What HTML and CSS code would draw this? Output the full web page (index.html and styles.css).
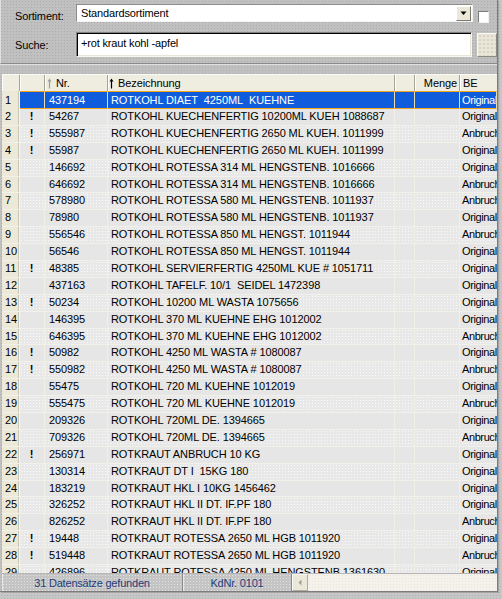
FILE: index.html
```html
<!DOCTYPE html>
<html lang="de">
<head>
<meta charset="utf-8">
<title>Artikelsuche</title>
<link rel="stylesheet" href="styles.css">
</head>
<body>
<div class="window">
  <div class="filter">
    <div class="frow frow-1">
      <label class="flabel">Sortiment:</label>
      <div class="combo">
        <span class="combo-text">Standardsortiment</span>
        <span class="combo-btn"><svg width="7" height="5" viewBox="0 0 7 5"><path d="M0.5 0.5h6l-3 3.5z" fill="#000"/></svg></span>
      </div>
      <span class="check"></span>
    </div>
    <div class="frow frow-2">
      <label class="flabel">Suche:</label>
      <div class="search">+rot kraut kohl -apfel</div>
      <span class="sbtn"></span>
    </div>
  </div>
  <div class="strip"></div>
  <div class="grid">
    <div class="hdr">
      <span class="h h-no"></span>
      <span class="h h-ic"></span>
      <span class="h h-nr"><svg class="arr" width="5" height="11" viewBox="0 0 5 11"><path d="M2.5 0.5L4.5 3.5H3.1V10.5H1.9V3.5H0.5z" fill="#9a9a9a"/></svg>Nr.</span>
      <span class="h h-bez"><svg class="arr" width="5" height="11" viewBox="0 0 5 11"><path d="M2.5 0.5L4.5 3.5H3.1V10.5H1.9V3.5H0.5z" fill="#000"/></svg>Bezeichnung</span>
      <span class="h h-x"></span>
      <span class="h h-menge">Menge</span>
      <span class="h h-be">BE</span>
    </div>
    <div class="body">
      <div class="row sel"><span class="c-no">1</span><span class="c-ic"></span><span class="c-nr">437194</span><span class="c-bez">ROTKOHL DIAET&nbsp; 4250ML&nbsp; KUEHNE</span><span class="c-x"></span><span class="c-menge"></span><span class="c-be">Original</span></div>
      <div class="row"><span class="c-no">2</span><span class="c-ic">!</span><span class="c-nr">54267</span><span class="c-bez">ROTKOHL KUECHENFERTIG 10200ML KUEH 1088687</span><span class="c-x"></span><span class="c-menge"></span><span class="c-be">Original</span></div>
      <div class="row odd"><span class="c-no">3</span><span class="c-ic">!</span><span class="c-nr">555987</span><span class="c-bez">ROTKOHL KUECHENFERTIG 2650 ML KUEH. 1011999</span><span class="c-x"></span><span class="c-menge"></span><span class="c-be">Anbruch</span></div>
      <div class="row"><span class="c-no">4</span><span class="c-ic">!</span><span class="c-nr">55987</span><span class="c-bez">ROTKOHL KUECHENFERTIG 2650 ML KUEH. 1011999</span><span class="c-x"></span><span class="c-menge"></span><span class="c-be">Original</span></div>
      <div class="row odd"><span class="c-no">5</span><span class="c-ic"></span><span class="c-nr">146692</span><span class="c-bez">ROTKOHL ROTESSA 314 ML HENGSTENB. 1016666</span><span class="c-x"></span><span class="c-menge"></span><span class="c-be">Original</span></div>
      <div class="row"><span class="c-no">6</span><span class="c-ic"></span><span class="c-nr">646692</span><span class="c-bez">ROTKOHL ROTESSA 314 ML HENGSTENB. 1016666</span><span class="c-x"></span><span class="c-menge"></span><span class="c-be">Anbruch</span></div>
      <div class="row odd"><span class="c-no">7</span><span class="c-ic"></span><span class="c-nr">578980</span><span class="c-bez">ROTKOHL ROTESSA 580 ML HENGSTENB. 1011937</span><span class="c-x"></span><span class="c-menge"></span><span class="c-be">Anbruch</span></div>
      <div class="row"><span class="c-no">8</span><span class="c-ic"></span><span class="c-nr">78980</span><span class="c-bez">ROTKOHL ROTESSA 580 ML HENGSTENB. 1011937</span><span class="c-x"></span><span class="c-menge"></span><span class="c-be">Original</span></div>
      <div class="row odd"><span class="c-no">9</span><span class="c-ic"></span><span class="c-nr">556546</span><span class="c-bez">ROTKOHL ROTESSA 850 ML HENGST. 1011944</span><span class="c-x"></span><span class="c-menge"></span><span class="c-be">Anbruch</span></div>
      <div class="row"><span class="c-no">10</span><span class="c-ic"></span><span class="c-nr">56546</span><span class="c-bez">ROTKOHL ROTESSA 850 ML HENGST. 1011944</span><span class="c-x"></span><span class="c-menge"></span><span class="c-be">Original</span></div>
      <div class="row odd"><span class="c-no">11</span><span class="c-ic">!</span><span class="c-nr">48385</span><span class="c-bez">ROTKOHL SERVIERFERTIG 4250ML KUE # 1051711</span><span class="c-x"></span><span class="c-menge"></span><span class="c-be">Original</span></div>
      <div class="row"><span class="c-no">12</span><span class="c-ic"></span><span class="c-nr">437163</span><span class="c-bez">ROTKOHL TAFELF. 10/1&nbsp; SEIDEL 1472398</span><span class="c-x"></span><span class="c-menge"></span><span class="c-be">Original</span></div>
      <div class="row odd"><span class="c-no">13</span><span class="c-ic">!</span><span class="c-nr">50234</span><span class="c-bez">ROTKOHL 10200 ML WASTA 1075656</span><span class="c-x"></span><span class="c-menge"></span><span class="c-be">Original</span></div>
      <div class="row"><span class="c-no">14</span><span class="c-ic"></span><span class="c-nr">146395</span><span class="c-bez">ROTKOHL 370 ML KUEHNE EHG 1012002</span><span class="c-x"></span><span class="c-menge"></span><span class="c-be">Original</span></div>
      <div class="row odd"><span class="c-no">15</span><span class="c-ic"></span><span class="c-nr">646395</span><span class="c-bez">ROTKOHL 370 ML KUEHNE EHG 1012002</span><span class="c-x"></span><span class="c-menge"></span><span class="c-be">Anbruch</span></div>
      <div class="row"><span class="c-no">16</span><span class="c-ic">!</span><span class="c-nr">50982</span><span class="c-bez">ROTKOHL 4250 ML WASTA # 1080087</span><span class="c-x"></span><span class="c-menge"></span><span class="c-be">Original</span></div>
      <div class="row odd"><span class="c-no">17</span><span class="c-ic">!</span><span class="c-nr">550982</span><span class="c-bez">ROTKOHL 4250 ML WASTA # 1080087</span><span class="c-x"></span><span class="c-menge"></span><span class="c-be">Anbruch</span></div>
      <div class="row"><span class="c-no">18</span><span class="c-ic"></span><span class="c-nr">55475</span><span class="c-bez">ROTKOHL 720 ML KUEHNE 1012019</span><span class="c-x"></span><span class="c-menge"></span><span class="c-be">Original</span></div>
      <div class="row odd"><span class="c-no">19</span><span class="c-ic"></span><span class="c-nr">555475</span><span class="c-bez">ROTKOHL 720 ML KUEHNE 1012019</span><span class="c-x"></span><span class="c-menge"></span><span class="c-be">Anbruch</span></div>
      <div class="row"><span class="c-no">20</span><span class="c-ic"></span><span class="c-nr">209326</span><span class="c-bez">ROTKOHL 720ML DE. 1394665</span><span class="c-x"></span><span class="c-menge"></span><span class="c-be">Original</span></div>
      <div class="row odd"><span class="c-no">21</span><span class="c-ic"></span><span class="c-nr">709326</span><span class="c-bez">ROTKOHL 720ML DE. 1394665</span><span class="c-x"></span><span class="c-menge"></span><span class="c-be">Anbruch</span></div>
      <div class="row"><span class="c-no">22</span><span class="c-ic">!</span><span class="c-nr">256971</span><span class="c-bez">ROTKRAUT ANBRUCH 10 KG</span><span class="c-x"></span><span class="c-menge"></span><span class="c-be">Original</span></div>
      <div class="row odd"><span class="c-no">23</span><span class="c-ic"></span><span class="c-nr">130314</span><span class="c-bez">ROTKRAUT DT I&nbsp; 15KG 180</span><span class="c-x"></span><span class="c-menge"></span><span class="c-be">Original</span></div>
      <div class="row"><span class="c-no">24</span><span class="c-ic"></span><span class="c-nr">183219</span><span class="c-bez">ROTKRAUT HKL I 10KG 1456462</span><span class="c-x"></span><span class="c-menge"></span><span class="c-be">Original</span></div>
      <div class="row odd"><span class="c-no">25</span><span class="c-ic"></span><span class="c-nr">326252</span><span class="c-bez">ROTKRAUT HKL II DT. IF.PF 180</span><span class="c-x"></span><span class="c-menge"></span><span class="c-be">Original</span></div>
      <div class="row"><span class="c-no">26</span><span class="c-ic"></span><span class="c-nr">826252</span><span class="c-bez">ROTKRAUT HKL II DT. IF.PF 180</span><span class="c-x"></span><span class="c-menge"></span><span class="c-be">Anbruch</span></div>
      <div class="row odd"><span class="c-no">27</span><span class="c-ic">!</span><span class="c-nr">19448</span><span class="c-bez">ROTKRAUT ROTESSA 2650 ML HGB 1011920</span><span class="c-x"></span><span class="c-menge"></span><span class="c-be">Original</span></div>
      <div class="row"><span class="c-no">28</span><span class="c-ic">!</span><span class="c-nr">519448</span><span class="c-bez">ROTKRAUT ROTESSA 2650 ML HGB 1011920</span><span class="c-x"></span><span class="c-menge"></span><span class="c-be">Anbruch</span></div>
      <div class="row odd"><span class="c-no">29</span><span class="c-ic"></span><span class="c-nr">426896</span><span class="c-bez">ROTKRAUT ROTESSA 4250 ML HENGSTENB 1361630</span><span class="c-x"></span><span class="c-menge"></span><span class="c-be">Original</span></div>
    </div>
  </div>
  <div class="status">
    <span class="panel p-count">31 Datensätze gefunden</span>
    <span class="panel p-kd">KdNr. 0101</span>
    <span class="hscroll">
      <span class="sb-arrow"><svg width="4" height="7" viewBox="0 0 4 7"><path d="M3.5 0.5v6L0.5 3.5z" fill="#a0a0a0"/></svg></span>
      <span class="sb-track"></span>
    </span>
  </div>
</div>
</body>
</html>
```

FILE: styles.css
```css
html, body {
  margin: 0;
  padding: 0;
}
body {
  width: 502px;
  height: 599px;
  overflow: hidden;
  background-color: #c6c6c6;
  background-image: radial-gradient(rgba(0,0,0,0.10) 0.6px, transparent 0.9px);
  background-size: 3px 3px;
  font-family: "Liberation Sans", Arial, sans-serif;
  font-size: 11px;
  color: #000;
}
.window {
  width: 497px;
  height: 591px;
  display: flex;
  flex-direction: column;
  background-color: #c0c0c0;
  background-image: radial-gradient(rgba(0,0,0,0.10) 0.6px, transparent 0.9px);
  background-size: 3px 3px;
  border-right: 1px solid #7c7c7c;
  border-bottom: 1px solid #7c7c7c;
  box-shadow: 1px 1px 0 #a4a4a4;
  overflow: hidden;
}

/* filter panel */
.filter {
  height: 64px;
  flex: none;
  box-sizing: border-box;
  border-left: 1px solid #e2e2e2;
  border-bottom: 1px solid #8a8a8a;
  box-shadow: 0 1px 0 #e0e0e0;
  padding-top: 4px;
  display: flex;
  flex-direction: column;
  gap: 9px;
}
.frow {
  display: flex;
  align-items: flex-start;
}
.flabel {
  width: 61px;
  padding-left: 14px;
  letter-spacing: -0.15px;
  line-height: 13px;
}
.frow-1 .flabel { margin-top: 6px; }
.frow-2 .flabel { margin-top: 7px; }
.combo {
  width: 397px;
  height: 18px;
  box-sizing: border-box;
  background: #fff;
  border: 1px solid;
  border-color: #8c8c8c #f4f4f4 #f4f4f4 #8c8c8c;
  display: flex;
  align-items: center;
  justify-content: space-between;
}
.combo-text {
  padding-left: 4px;
  letter-spacing: -0.15px;
  line-height: 14px;
}
.combo-btn {
  width: 15px;
  height: 15px;
  box-sizing: border-box;
  background: #ebe8d8;
  border: 1px solid;
  border-color: #ffffff #7a7a70 #7a7a70 #ffffff;
  display: flex;
  align-items: center;
  justify-content: center;
  margin-right: 1px;
}
.check {
  width: 11px;
  height: 12px;
  box-sizing: border-box;
  margin-left: 5px;
  margin-top: 7px;
  background: #fff;
  border: 1px solid;
  border-color: #7c7c7c #f0f0f0 #f0f0f0 #7c7c7c;
}
.search {
  width: 397px;
  height: 25px;
  box-sizing: border-box;
  background: #fff;
  border: 1px solid;
  border-color: #808080 #f6f6ee #f6f6ee #808080;
  box-shadow: inset 1px 1px 0 #000, inset -1px -1px 0 #e8e5d6;
  padding: 4px 0 0 4px;
  line-height: 13px;
  letter-spacing: -0.15px;
}
.sbtn {
  width: 20px;
  height: 24px;
  margin-left: 5px;
  margin-top: 1px;
  box-sizing: border-box;
  background-color: #e9e6d8;
  background-image: radial-gradient(rgba(0,0,0,0.12) 0.6px, transparent 0.9px);
  background-size: 4px 4px;
  border: 1px solid;
  border-color: #f8f8f4 #8a8a80 #8a8a80 #f8f8f4;
}
.strip {
  height: 10px;
  flex: none;
}

/* grid */
.grid {
  margin-left: 2px;
  width: 495px;
  height: 499px;
  flex: none;
  display: flex;
  flex-direction: column;
  overflow: hidden;
  background: #e6e6e6;
}
.hdr, .row {
  display: grid;
  grid-template-columns: 18px 25px 63px 287px 20px 45px 37px;
}
.hdr {
  height: 17px;
  flex: none;
  background-color: #efede0;
  border-top: 1px solid #fbfbf6;
  box-sizing: border-box;
}
.h {
  box-sizing: border-box;
  border-right: 1px solid #a6a49a;
  box-shadow: inset 1px 0 0 #ffffff;
  display: flex;
  align-items: center;
  line-height: 15px;
  white-space: nowrap;
  overflow: hidden;
  letter-spacing: -0.1px;
}
.h-nr { padding-left: 2px; }
.h-bez { padding-left: 1px; }
.arr { margin-right: 4px; flex: none; }
.h-menge { justify-content: flex-end; padding-right: 2px; }
.h-be { padding-left: 3px; border-right: none; }

.body {
  flex: 1;
  overflow: hidden;
}
.row {
  height: 16.9px;
  box-sizing: border-box;
  background-color: #e6e6e6;
  border-bottom: 1px solid #f1f1ea;
}
.row.odd {
  background-color: #e8e8e8;
  background-image: radial-gradient(rgba(255,255,255,0.75) 0.6px, transparent 0.9px);
  background-size: 3px 3px;
}
.row > span {
  box-sizing: border-box;
  border-right: 1px solid #f2f0e2;
  white-space: nowrap;
  overflow: hidden;
  line-height: 15.9px;
  letter-spacing: -0.1px;
}
.c-no {
  background: #ece9d8;
  padding-left: 3px;
  border-right: 1px solid #f8f7ef !important;
  box-shadow: inset -1px 0 0 #c8c5b4;
}
.c-ic {
  text-align: center;
  font-weight: bold;
  padding-right: 1px;
}
.c-nr { padding-left: 4px; }
.c-bez { padding-left: 3px; }
.row > .c-be {
  padding-left: 2px;
  border-right: none;
  letter-spacing: -0.4px;
}

.row.sel {
  height: 18px;
  background: #e6e6e6;
  border-bottom: none;
}
.row.sel > span:not(.c-no) {
  background: #0f5ddc;
  color: #fff;
  border-top: 1px solid #f3a21c;
  border-bottom: 1px solid #f3a21c;
  border-right: 1px solid #e9dcae;
  line-height: 16px;
}
.row.sel > .c-be { border-right: none; }
.row.sel .c-no { line-height: 18px; }

/* status bar */
.status {
  height: 18px;
  flex: none;
  margin-left: 2px;
  display: flex;
  border-top: 1px solid #b4b4b4;
  box-sizing: border-box;
}
.panel {
  box-sizing: border-box;
  color: #1f3d7a;
  text-align: center;
  padding-top: 2px;
  line-height: 15px;
  letter-spacing: -0.2px;
  background-color: #c4c4c4;
  background-image: radial-gradient(rgba(255,255,255,0.5) 0.6px, transparent 0.9px);
  background-size: 3px 3px;
  border-right: 1px solid #8c8c8c;
  box-shadow: inset 1px 0 0 #e8e8e8;
}
.p-count { width: 181px; }
.p-kd { width: 109px; }
.hscroll {
  flex: 1;
  display: flex;
}
.sb-arrow {
  width: 16px;
  box-sizing: border-box;
  background: #ebe8da;
  border: 1px solid;
  border-color: #fbfbf6 #b0ad9e #b0ad9e #fbfbf6;
  display: flex;
  align-items: center;
  justify-content: center;
}
.sb-track {
  flex: 1;
  background-color: #f4f2ea;
  background-image: radial-gradient(rgba(0,0,0,0.05) 0.6px, transparent 0.9px);
  background-size: 3px 3px;
}
```
